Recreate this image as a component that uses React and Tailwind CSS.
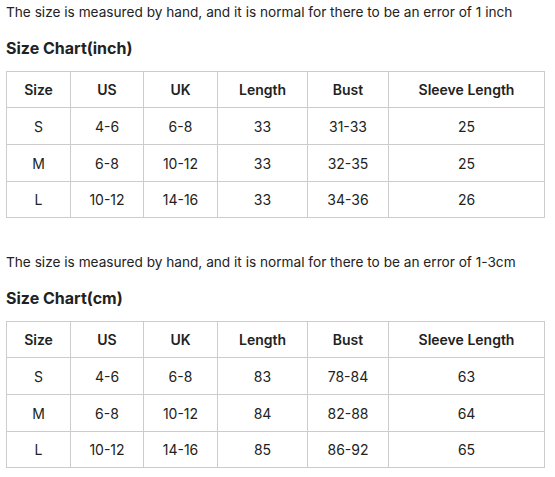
const headers = ['Size', 'US', 'UK', 'Length', 'Bust', 'Sleeve Length'];
const widths = ['w-[64px]', 'w-[73px]', 'w-[74px]', 'w-[90px]', 'w-[81px]', 'w-[156px]'];

const charts = [
  {
    note: 'The size is measured by hand, and it is normal for there to be an error of 1 inch',
    title: 'Size Chart(inch)',
    rows: [
      ['S', '4-6', '6-8', '33', '31-33', '25'],
      ['M', '6-8', '10-12', '33', '32-35', '25'],
      ['L', '10-12', '14-16', '33', '34-36', '26'],
    ],
  },
  {
    note: 'The size is measured by hand, and it is normal for there to be an error of 1-3cm',
    title: 'Size Chart(cm)',
    rows: [
      ['S', '4-6', '6-8', '83', '78-84', '63'],
      ['M', '6-8', '10-12', '84', '82-88', '64'],
      ['L', '10-12', '14-16', '85', '86-92', '65'],
    ],
  },
];

function Chart({ note, title, rows, first }) {
  return (
    <div className={first ? '' : 'mt-[32px]'}>
      <p className="text-[13.65px] leading-[24px] text-[#222]">{note}</p>
      <h2 className="mt-[12px] mb-[11px] text-[16px] leading-[24px] font-bold text-[#222]">{title}</h2>
      <table className="w-[538px] border-collapse table-fixed text-[14px] text-[#222]">
        <thead>
          <tr>
            {headers.map((h, i) => (
              <th key={h} className={`${widths[i]} h-[36px] border border-[#cccccc] font-semibold text-center p-0`}>
                {h}
              </th>
            ))}
          </tr>
        </thead>
        <tbody>
          {rows.map((r, ri) => (
            <tr key={r[0]}>
              {r.map((c, i) => (
                <td
                  key={i}
                  className={`${ri === rows.length - 1 ? 'h-[36px]' : 'h-[37px]'} border border-[#cccccc] text-center p-0 font-normal`}
                >
                  {c}
                </td>
              ))}
            </tr>
          ))}
        </tbody>
      </table>
    </div>
  );
}

export default function App() {
  return (
    <div className="w-[555px] h-[477px] bg-white px-[6px] overflow-hidden" style={{ fontFamily: 'Inter, "Noto Sans", sans-serif' }}>
      {charts.map((c, i) => (
        <Chart key={c.title} {...c} first={i === 0} />
      ))}
    </div>
  );
}
